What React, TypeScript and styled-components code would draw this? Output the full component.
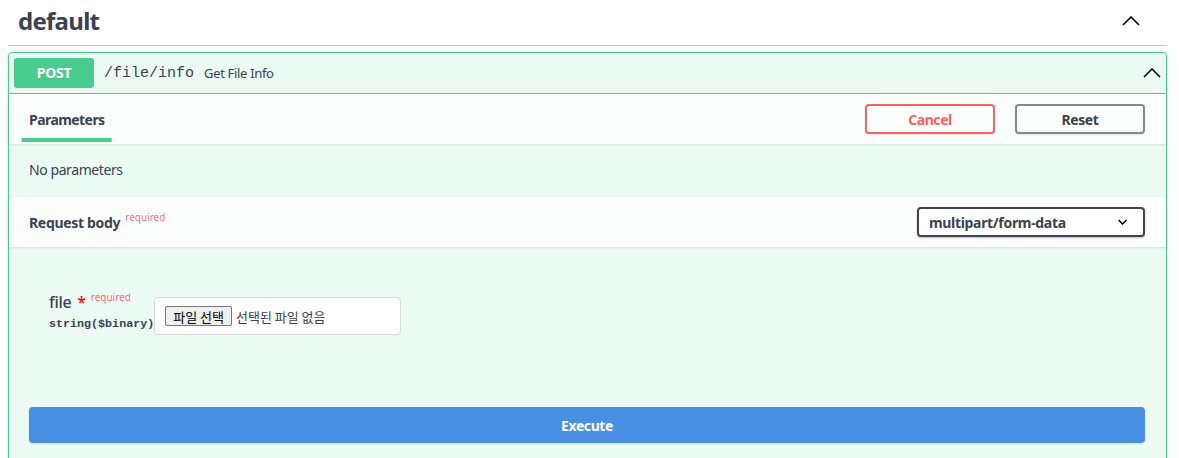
import styled, { createGlobalStyle } from 'styled-components';

const GlobalStyle = createGlobalStyle`
  html, body {
    margin: 0;
    padding: 0;
    overflow: hidden;
    background: #fff;
  }
  body {
    font-family: "Noto Sans", "Noto Sans CJK KR", sans-serif;
    letter-spacing: -0.02em;
    color: #3b4151;
  }
`;

const Page = styled.div`
  padding: 0 12px 0 8px;
`;

const TagHeader = styled.h3`
  display: flex;
  align-items: center;
  justify-content: space-between;
  margin: 0;
  padding: 9px 27px 12px 10px;
  font-size: 24px;
  line-height: 24px;
  font-weight: 700;
  letter-spacing: -0.03em;
  color: #3b4151;
  border-bottom: 1px solid rgba(59, 65, 81, 0.3);
`;

const Opblock = styled.div`
  margin-top: 6px;
  border: 1px solid #49cc90;
  border-radius: 4px;
  background: rgba(73, 204, 144, 0.1);
  box-shadow: 0 0 3px rgba(0, 0, 0, 0.19);
`;

const Summary = styled.div`
  display: flex;
  align-items: center;
  padding: 5px;
  border-bottom: 1px solid #49cc90;
`;

const Method = styled.span`
  min-width: 80px;
  padding: 6px 0;
  border-radius: 3px;
  background: #49cc90;
  color: #fff;
  font-size: 14px;
  line-height: 18px;
  font-weight: 700;
  text-align: center;
  text-shadow: 0 1px 0 rgba(0, 0, 0, 0.1);
`;

const Path = styled.span`
  padding: 0 10px;
  font-family: "Liberation Mono", monospace;
  font-size: 15px;
  letter-spacing: 0;
  color: #3b4151;
`;

const Description = styled.span`
  flex: 1;
  font-size: 13px;
  color: #3b4151;
`;

const SectionHeader = styled.div`
  display: flex;
  align-items: center;
  min-height: 50px;
  padding: 0 21px 0 20px;
  box-sizing: border-box;
  background: rgba(255, 255, 255, 0.8);
  box-shadow: 0 1px 2px rgba(0, 0, 0, 0.1);
  position: relative;
`;

const TabItem = styled.h4`
  position: relative;
  align-self: stretch;
  display: flex;
  align-items: center;
  margin: 0;
  font-size: 14px;
  font-weight: 700;
  letter-spacing: -0.04em;
  color: #3b4151;

  &::after {
    content: '';
    position: absolute;
    left: 50%;
    bottom: 2px;
    width: 120%;
    height: 4px;
    transform: translateX(-50%);
    background: #49cc90;
  }
`;

const Actions = styled.div`
  display: flex;
  gap: 20px;
  margin-left: auto;
`;

const Button = styled.button<{ $tone: 'cancel' | 'reset' }>`
  width: 130px;
  height: 30px;
  border: 2px solid ${(p) => (p.$tone === 'cancel' ? '#ff6060' : '#888')};
  border-radius: 4px;
  background: transparent;
  color: ${(p) => (p.$tone === 'cancel' ? '#ff6060' : '#3b4151')};
  font-family: inherit;
  font-size: 14px;
  font-weight: 700;
  letter-spacing: -0.03em;
  box-shadow: 0 1px 2px rgba(0, 0, 0, 0.1);
`;

const NoParams = styled.div`
  padding: 16px 20px 17px;
  font-size: 14px;
  line-height: 20px;
  letter-spacing: -0.03em;
  color: #3b4151;
`;

const Title = styled.h4`
  margin: 0;
  flex: 1;
  font-size: 14px;
  font-weight: 700;
  color: #3b4151;
`;

const Required = styled.sup`
  margin-left: 5px;
  font-size: 10px;
  font-weight: 400;
  letter-spacing: 0;
  color: rgba(255, 0, 0, 0.6);
  vertical-align: 7px;
  line-height: 0;
`;

const SelectBox = styled.div`
  display: flex;
  align-items: center;
  justify-content: space-between;
  width: 228px;
  height: 30px;
  box-sizing: border-box;
  padding: 0 16px 0 10px;
  border: 2px solid #41444e;
  border-radius: 4px;
  background: #fff;
  box-shadow: 0 1px 2px rgba(0, 0, 0, 0.25);
  font-size: 14px;
  font-weight: 700;
  color: #3b4151;
`;

const Body = styled.div`
  padding: 44px 20px 0 40px;
`;

const ParamRow = styled.div`
  display: flex;
  align-items: flex-start;
`;

const NameCol = styled.div`
  display: flex;
  flex-direction: column;
`;

const ParamName = styled.div`
  font-size: 16px;
  line-height: 22px;
  font-weight: 500;
  color: #3b4151;

  span {
    margin-left: 6px;
    color: red;
  }
`;

const ParamType = styled.div`
  margin-top: 3px;
  font-family: "Liberation Mono", monospace;
  font-size: 11.7px;
  line-height: 16px;
  font-weight: 700;
  letter-spacing: 0;
  color: #3b4151;
`;

const FileInput = styled.div`
  display: flex;
  align-items: center;
  gap: 4px;
  width: 247px;
  height: 38px;
  margin-top: 6px;
  box-sizing: border-box;
  padding: 0 10px;
  border: 1px solid #d9d9d9;
  border-radius: 4px;
  background: #fff;
  font-family: "Noto Sans CJK KR", sans-serif;
  font-size: 13px;
  letter-spacing: 0;
  color: #3b4151;
`;

const FileButton = styled.span`
  display: inline-flex;
  align-items: center;
  height: 20px;
  box-sizing: border-box;
  padding: 0 7px;
  border: 1px solid #767676;
  border-radius: 2px;
  background: #efefef;
  color: #000;
  font-size: 13px;
`;

const ExecuteWrapper = styled.div`
  padding: 72px 21px 20px 20px;
`;

const Execute = styled.button`
  display: block;
  width: 100%;
  height: 36px;
  border: 2px solid #4990e2;
  border-radius: 4px;
  background: #4990e2;
  color: #fff;
  font-family: inherit;
  font-size: 14px;
  font-weight: 700;
  letter-spacing: -0.03em;
  box-shadow: 0 1px 2px rgba(0, 0, 0, 0.1);
`;

const Chevron = ({ down = false, w = 18, h = 10 }: { down?: boolean; w?: number; h?: number }) => (
  <svg width={w} height={h} viewBox="0 0 18 10" fill="none" style={{ flexShrink: 0 }}>
    <polyline
      points={down ? '1,1 9,9 17,1' : '1,9 9,1 17,9'}
      stroke="#000"
      strokeWidth={down ? 3 : 1.6}
    />
  </svg>
);

export default function App() {
  return (
    <Page>
      <GlobalStyle />
      <TagHeader>
        <span>default</span>
        <Chevron />
      </TagHeader>
      <Opblock>
        <Summary>
          <Method>POST</Method>
          <Path>/file/info</Path>
          <Description>Get File Info</Description>
          <Chevron />
        </Summary>
        <SectionHeader>
          <TabItem>Parameters</TabItem>
          <Actions>
            <Button $tone="cancel">Cancel</Button>
            <Button $tone="reset">Reset</Button>
          </Actions>
        </SectionHeader>
        <NoParams>No parameters</NoParams>
        <SectionHeader>
          <Title>
            Request body<Required>required</Required>
          </Title>
          <SelectBox>
            <span>multipart/form-data</span>
            <Chevron down w={9} h={6} />
          </SelectBox>
        </SectionHeader>
        <Body>
          <ParamRow>
            <NameCol>
              <ParamName>
                file<span>*</span>
                <Required>required</Required>
              </ParamName>
              <ParamType>string($binary)</ParamType>
            </NameCol>
            <FileInput>
              <FileButton>파일 선택</FileButton>
              <span>선택된 파일 없음</span>
            </FileInput>
          </ParamRow>
        </Body>
        <ExecuteWrapper>
          <Execute>Execute</Execute>
        </ExecuteWrapper>
      </Opblock>
    </Page>
  );
}
